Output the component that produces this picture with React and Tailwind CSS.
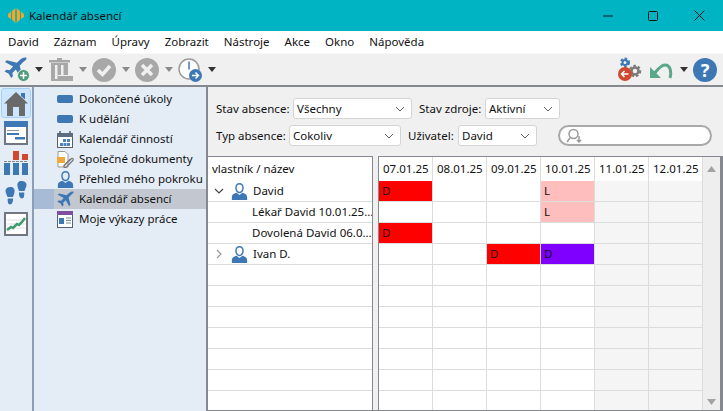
import React from 'react';

const font = { fontFamily: '"Noto Sans", "Open Sans", sans-serif' };

const dates = ['07.01.25', '08.01.25', '09.01.25', '10.01.25', '11.01.25', '12.01.25'];

const rows = [
  { cells: { 0: 'red', 3: 'pink' } },
  { cells: { 3: 'pink' } },
  { cells: { 0: 'red' } },
  { cells: { 2: 'red', 3: 'violet' } },
  { cells: {} },
  { cells: {} },
  { cells: {} },
  { cells: {} },
  { cells: {} },
  { cells: {} },
  { cells: {} },
];

function Caret({ className = 'fill-[#333]' }) {
  return (
    <svg width="8" height="5" viewBox="0 0 8 5" className="shrink-0">
      <path d="M0 0h8L4 5z" className={className} />
    </svg>
  );
}

function Plane({ size = 24, color = '#3d78b5' }) {
  return (
    <svg width={size} height={size} viewBox="0 0 24 24">
      <path
        fill={color}
        d="M23.500 1c-1.500-1-4.500 0-6.500 1.700l-3.500 3.300L3 3.500 1 5.300l8.500 4.700-3.700 3.800-3.300-.6L.5 15l4.500 2.500L7.500 22l1.800-2-.6-3.300 3.700-3.700 4.700 8.500 1.900-2-2.600-10.500 3.300-3.500C21.500 4 24 2.500 23.500 1z"
      />
    </svg>
  );
}

function Person({ size = 20 }) {
  return (
    <svg width={size} height={size} viewBox="0 0 20 20">
      <path fill="#3d78b5" d="M10 0c3 0 5 2 5 5.500S13 12 10 12 5 9 5 5.500 7 0 10 0zm0 1.800c-2 0-3.300 1.400-3.300 3.700S8 10.300 10 10.300s3.300-2.500 3.300-4.800-1.300-3.700-3.300-3.700z" />
      <path fill="#3d78b5" d="M6.500 11.500 10 14l3.500-2.500c3 1 5.500 2 5.500 5.500v3H1v-3c0-3.500 2.500-4.500 5.500-5.500z" />
    </svg>
  );
}

function NavIcon({ kind }) {
  if (kind === 'bar') {
    return <div className="w-[16px] h-[8px] rounded-[2px] bg-[#3d78b5]" />;
  }
  if (kind === 'calendar') {
    return (
      <svg width="16" height="17" viewBox="0 0 16 17">
        <rect x="0.500" y="2.500" width="15" height="14" fill="#fff" stroke="#56606e" />
        <rect x="0" y="2" width="16" height="4" fill="#5f6c80" />
        <path d="M3 0v3M13 0v3" stroke="#56606e" strokeWidth="1.500" />
        <path fill="#4a83bd" d="M6 8h3v3H6zM10 8h3v3h-3zM3 12h3v3H3zM6.500 12h3v3h-3zM10 12h3v3h-3z" />
      </svg>
    );
  }
  if (kind === 'docs') {
    return (
      <svg width="17" height="17" viewBox="0 0 17 17">
        <path d="M1 .500h7l3 3V16H1z" fill="#fff" stroke="#9a9a9a" />
        <rect x="0" y="6" width="8" height="6" fill="#efa93b" />
        <path d="M7 15 14 8c1.500-1.500 3 0 1.800 1.500L9.500 16c-2 1.500-3.500-.5-2-2l6-6" fill="none" stroke="#777" strokeWidth="1.200" />
      </svg>
    );
  }
  if (kind === 'person') return <Person size={17} />;
  if (kind === 'plane') return <Plane size={17} />;
  return (
    <svg width="16" height="17" viewBox="0 0 16 17">
      <rect x="0.500" y="0.500" width="15" height="16" fill="#fff" stroke="#56606e" />
      <rect x="0" y="0" width="16" height="4" fill="#7d4f9e" />
      <rect x="2" y="7" width="5" height="6" fill="#3d78b5" />
      <path d="M9 7h5M9 9.500h5M9 12h5" stroke="#7b8594" />
    </svg>
  );
}

const navItems = [
  ['bar', 'Dokončené úkoly'],
  ['bar', 'K udělání'],
  ['calendar', 'Kalendář činností'],
  ['docs', 'Společné dokumenty'],
  ['person', 'Přehled mého pokroku'],
  ['plane', 'Kalendář absencí'],
  ['sheet', 'Moje výkazy práce'],
];

function Select({ label, labelWidth, width, value }) {
  return (
    <div className="flex items-center shrink-0">
      <span className="text-[11.5px] text-[#111] whitespace-nowrap" style={{ width: labelWidth }}>{label}</span>
      <div
        className="h-[21px] bg-white border border-[#d4d4d4] rounded-[3px] flex items-center justify-between pl-[3px] pr-[6px] text-[11.5px] text-[#111]"
        style={{ width }}
      >
        <span>{value}</span>
        <svg width="10" height="6" viewBox="0 0 10 6">
          <path d="M1 1l4 4 4-4" fill="none" stroke="#606060" />
        </svg>
      </div>
    </div>
  );
}

function TreeRow({ children, open, person, indent }) {
  return (
    <div className="h-[21px] border-b border-[#dcdcdc] flex items-center text-[11.5px] text-[#111] whitespace-nowrap overflow-hidden">
      {person && (
        <div className="w-[13px] ml-[4px] mr-[6px] flex justify-center">
          <svg width="10" height="10" viewBox="0 0 10 10">
            {open
              ? <path d="M1 3l4 4 4-4" fill="none" stroke="#444" strokeWidth="1.200" />
              : <path d="M3 1l4 4-4 4" fill="none" stroke="#999" strokeWidth="1.200" />}
          </svg>
        </div>
      )}
      {person && <div className="mr-[5px] flex"><Person size={17} /></div>}
      <span className={indent ? 'pl-[44px]' : ''}>{children}</span>
    </div>
  );
}

function GridCell({ kind, weekend }) {
  let bg = weekend ? 'bg-[#f5f5f5]' : 'bg-white';
  let text = '';
  if (kind === 'red') { bg = 'bg-[#ff0000]'; text = 'D'; }
  if (kind === 'pink') { bg = 'bg-[#ffbebe]'; text = 'L'; }
  if (kind === 'violet') { bg = 'bg-[#8000ff]'; text = 'D'; }
  return (
    <div className={`${bg} border-r border-b border-[#dcdcdc] h-[21px] w-[54px] pl-[3px] text-[11.5px] text-[#111] leading-[20px]`}>
      {text}
    </div>
  );
}

function Gear({ cx, cy, r, color, width }) {
  return (
    <g>
      <circle cx={cx} cy={cy} r={r} fill="none" stroke={color} strokeWidth={width} />
      <circle cx={cx} cy={cy} r={r + width / 2 + 0.5} fill="none" stroke={color} strokeWidth="2" strokeDasharray="2.500 2" />
    </g>
  );
}

export default function App() {
  return (
    <div className="w-[723px] h-[411px] flex flex-col overflow-hidden bg-[#f0f0f0]" style={font}>
      {/* title bar */}
      <div className="h-[31px] bg-[#00b4c3] flex items-center shrink-0">
        <svg width="16" height="15" viewBox="0 0 16 15" className="ml-[8px]">
          <path fill="#f5a623" d="M0 6 3 3.500V11L0 9zM4 3 7.200 0v15L4 11.500zM8.800 0 12 3v8.500L8.800 15zM13 3.500 16 6v3l-3 2z" />
        </svg>
        <span className="ml-[5px] text-[11.5px] text-[#101010]">Kalendář absencí</span>
        <div className="ml-auto flex items-center">
          <svg width="10" height="10" viewBox="0 0 10 10" className="mr-[35px]"><path d="M0 5h10" stroke="#111" /></svg>
          <svg width="10" height="10" viewBox="0 0 10 10" className="mr-[36px]"><rect x=".5" y=".5" width="9" height="9" rx="1" fill="none" stroke="#111" /></svg>
          <svg width="11" height="11" viewBox="0 0 11 11" className="mr-[18px]"><path d="M.5.500l10 10M10.500.5l-10 10" stroke="#111" /></svg>
        </div>
      </div>

      {/* menu */}
      <div className="h-[22px] bg-white flex items-center pl-[8px] gap-[15px] text-[11.5px] text-[#111] shrink-0">
        {['David', 'Záznam', 'Úpravy', 'Zobrazit', 'Nástroje', 'Akce', 'Okno', 'Nápověda'].map((m) => (
          <span key={m}>{m}</span>
        ))}
      </div>

      {/* toolbar */}
      <div className="h-[34px] bg-[#f0f0f0] border-t border-[#f8f8f8] border-b-2 border-b-[#85898f] flex items-center pl-[4px] pr-[6px] shrink-0">
        <div className="relative w-[26px] h-[25px]">
          <Plane size={23} />
          <div className="absolute right-0 bottom-0 w-[13px] h-[13px] rounded-full bg-[#4d9d7a] border border-[#f0f0f0] flex items-center justify-center">
            <svg width="7" height="7" viewBox="0 0 7 7"><path d="M3.500 0v7M0 3.500h7" stroke="#fff" strokeWidth="1.500" /></svg>
          </div>
        </div>
        <div className="ml-[5px] mr-[6px]"><Caret /></div>
        <svg width="24" height="24" viewBox="0 0 24 24">
          <path fill="#a8a8a8" d="M8 0h5v2h8v2.500H0V2h8zM2 5h17v18H2z" />
          <path fill="#f0f0f0" d="M6 7h2.500v14H6zM12 7h2.500v14H12z" />
          <path fill="#f0f0f0" d="M9 17h15v1H9z" />
          <path fill="#a8a8a8" d="M10 18h14v5H10z" />
        </svg>
        <div className="ml-[6px] mr-[5px]"><Caret className="fill-[#8a8a8a]" /></div>
        <svg width="24" height="24" viewBox="0 0 24 24">
          <circle cx="12" cy="12" r="12" fill="#a8a8a8" />
          <path d="M6 12l4.500 4.500L18 8" fill="none" stroke="#f0f0f0" strokeWidth="3.500" />
        </svg>
        <div className="ml-[6px] mr-[5px]"><Caret className="fill-[#8a8a8a]" /></div>
        <svg width="24" height="24" viewBox="0 0 24 24">
          <circle cx="12" cy="12" r="12" fill="#a8a8a8" />
          <path d="M7 7l10 10M17 7L7 17" stroke="#f0f0f0" strokeWidth="3.500" />
        </svg>
        <div className="ml-[6px] mr-[5px]"><Caret className="fill-[#8a8a8a]" /></div>
        <svg width="24" height="24" viewBox="0 0 24 24">
          <circle cx="11" cy="11" r="10" fill="#fff" stroke="#9a9a9a" strokeWidth="1.500" />
          <path d="M11 3.500v8" stroke="#3d78b5" strokeWidth="1.500" />
          <circle cx="17.500" cy="17.500" r="6.500" fill="#3d78b5" />
          <path d="M14 17.500h6M17.500 14.500l3 3-3 3" fill="none" stroke="#fff" strokeWidth="1.500" />
        </svg>
        <div className="ml-[6px]"><Caret /></div>

        <div className="ml-auto flex items-center">
          <svg width="25" height="25" viewBox="0 0 25 25">
            <Gear cx={7} cy={5.500} r={2.500} color="#3d78b5" width={2} />
            <Gear cx={17} cy={14} r={3.500} color="#7a7a7a" width={2.500} />
            <circle cx="7" cy="17" r="7" fill="#d0492f" />
            <path d="M3.500 17h7M6.500 14l-3 3 3 3" fill="none" stroke="#fff" strokeWidth="1.500" />
          </svg>
          <svg width="24" height="20" viewBox="0 0 24 20" className="ml-[6px]">
            <path d="M21 18c1.500-5 1-13-5-13-4 0-8 5-11 9" fill="none" stroke="#5aa78a" strokeWidth="3" />
            <path d="M1 7v11h11z" fill="#5aa78a" />
          </svg>
          <div className="ml-[7px] mr-[5px]"><Caret /></div>
          <div className="w-[24px] h-[24px] rounded-full bg-[#3d78b5] text-white text-[18px] leading-[24px] font-bold text-center">?</div>
        </div>
      </div>

      {/* main */}
      <div className="flex-1 flex min-h-0">
        {/* left strip */}
        <div className="w-[34px] bg-[#e4ecf6] border-r-2 border-[#8e9db8] flex flex-col items-center shrink-0 pt-[1px]">
          <div className="w-[30px] h-[30px] rounded-[3px] bg-[#cde6ff] border border-[#a5cff5] flex items-center justify-center">
            <svg width="24" height="25" viewBox="0 0 24 25">
              <path fill="#6a6a6a" d="M12 1 24 12.500h-3V25h-6v-9H9v9H3V12.500H0z" />
              <path fill="#3d78b5" d="M17 2h4v6.500L17 5z" />
            </svg>
          </div>
          <svg width="24" height="24" viewBox="0 0 24 24" className="mt-[3px]">
            <rect x="1" y="1" width="22" height="22" fill="#fff" stroke="#6f7680" strokeWidth="2" />
            <rect width="24" height="6" fill="#3d78b5" />
            <path fill="#8a97a8" d="M3 9h12v1H3z" />
            <path fill="#3d78b5" d="M3 12h12v2H3zM11 16h10v2.500H11z" />
          </svg>
          <svg width="24" height="24" viewBox="0 0 24 24" className="mt-[6px]">
            <path fill="#3d78b5" d="M0 12h6v12H0zM9 12h6v12H9zM18 12h6v12h-6z" />
            <path fill="#d0492f" d="M9 0h6v9H9zM18 3h6v6h-6z" />
            <path stroke="#888" strokeDasharray="3 1" d="M0 10.500h24" />
          </svg>
          <svg width="24" height="24" viewBox="0 0 24 24" className="mt-[6px]">
            <path fill="#3d78b5" d="M6.500 6c3 0 4.500 2 4 5-.3 2-1 3.500-1.500 5H3.500C3 14 1.500 12 1.500 10c0-2.500 2-4 5-4zM3.800 17.500H9c.3 3-1 6-3 6s-2.500-3-2.200-6zM17.500 0c3 0 5 1.500 5 4 0 2-1.500 4-2 6h-5.500c-.5-1.500-1.200-3-1.500-5-.5-3 1-5 4-5zM15 11.500h5.200c.3 3-.2 6-2.200 6s-3.300-3-3-6z" />
          </svg>
          <svg width="24" height="24" viewBox="0 0 24 24" className="mt-[7px]">
            <rect x="1" y="1" width="22" height="22" fill="#fff" stroke="#6f7680" strokeWidth="2" />
            <path d="M3 8h18M3 12h18M3 16h18" stroke="#ddd" />
            <path d="M3 18l4-3 2 1 4-4 2 1 3-3 3-4" fill="none" stroke="#3f9c6d" strokeWidth="2.500" />
          </svg>
        </div>

        {/* nav */}
        <div className="w-[174px] bg-[#e4ecf6] border-r-2 border-[#85898f] shrink-0 pt-[2px]">
          {navItems.map(([kind, label]) => {
            const selected = label === 'Kalendář absencí';
            return (
              <div key={label} className="h-[20px] flex items-center">
                <div className={`w-[20px] h-full ${selected ? 'bg-[#a8bbd6]' : ''}`} />
                <div className={`flex-1 h-full flex items-center ${selected ? 'bg-[#c3c8d0]' : ''}`}>
                  <div className="w-[25px] pl-[3px] flex items-center">
                    <NavIcon kind={kind} />
                  </div>
                  <span className="text-[11.5px] text-[#111] whitespace-nowrap">{label}</span>
                </div>
              </div>
            );
          })}
        </div>

        {/* content */}
        <div className="flex-1 flex flex-col min-w-0">
          <div className="h-[69px] pl-[8px] pt-[11px] shrink-0 flex flex-col gap-[6px]">
            <div className="flex items-center">
              <Select label="Stav absence:" labelWidth={77} width={119} value="Všechny" />
              <div className="w-[7px]" />
              <Select label="Stav zdroje:" labelWidth={66} width={75} value="Aktivní" />
            </div>
            <div className="flex items-center">
              <Select label="Typ absence:" labelWidth={73} width={112} value="Cokoliv" />
              <div className="w-[7px]" />
              <Select label="Uživatel:" labelWidth={50} width={79} value="David" />
              <div className="ml-[21px] w-[154px] h-[21px] rounded-full border-2 border-[#a9a9a9] bg-white flex items-center pl-[6px]">
                <svg width="16" height="15" viewBox="0 0 16 15">
                  <circle cx="7.500" cy="6" r="4.500" fill="none" stroke="#9a9a9a" strokeWidth="1.500" />
                  <path d="M4 10 1 14M13 8v6M11 12l2 2 2-2" fill="none" stroke="#9a9a9a" strokeWidth="1.500" />
                </svg>
              </div>
            </div>
          </div>

          <div className="flex-1 flex min-h-0">
            {/* tree */}
            <div className="w-[165px] shrink-0 bg-white border-t border-r border-[#85898f] overflow-hidden">
              <div className="h-[24px] flex items-center pl-[4px] text-[11.5px] text-[#111]">vlastník / název</div>
              <TreeRow person open>David</TreeRow>
              <TreeRow indent>Lékař David 10.01.25...</TreeRow>
              <TreeRow indent>Dovolená David 06.0...</TreeRow>
              <TreeRow person>Ivan D.</TreeRow>
              {rows.slice(4).map((r, i) => <TreeRow key={i} />)}
            </div>
            <div className="w-[5px] shrink-0" />
            {/* grid */}
            <div className="flex-1 min-w-0 flex bg-white border-t border-l border-[#85898f] overflow-hidden">
              <div className="w-[324px] shrink-0">
                <div className="h-[24px] flex">
                  {dates.map((d) => (
                    <div key={d} className="w-[54px] h-full pl-[4px] border-r border-[#dcdcdc] flex items-center text-[11.5px] text-[#111]">{d}</div>
                  ))}
                </div>
                {rows.map((r, i) => (
                  <div key={i} className="flex">
                    {dates.map((d, c) => (
                      <GridCell key={d} kind={r.cells[c]} weekend={c > 3} />
                    ))}
                  </div>
                ))}
              </div>
              <div className="w-[17px] shrink-0 bg-[#eeeeee] flex flex-col items-center justify-between pt-[9px] pb-[5px]">
                <svg width="9" height="6" viewBox="0 0 9 6"><path d="M0 6h9L4.500 0z" fill="#a3a3a3" /></svg>
                <svg width="9" height="6" viewBox="0 0 9 6"><path d="M0 0h9L4.500 6z" fill="#a3a3a3" /></svg>
              </div>
              <div className="w-[3px] shrink-0 bg-[#85898f]" />
            </div>
          </div>
          <div className="h-[1px] bg-[#85898f] shrink-0" />
        </div>
      </div>
    </div>
  );
}
